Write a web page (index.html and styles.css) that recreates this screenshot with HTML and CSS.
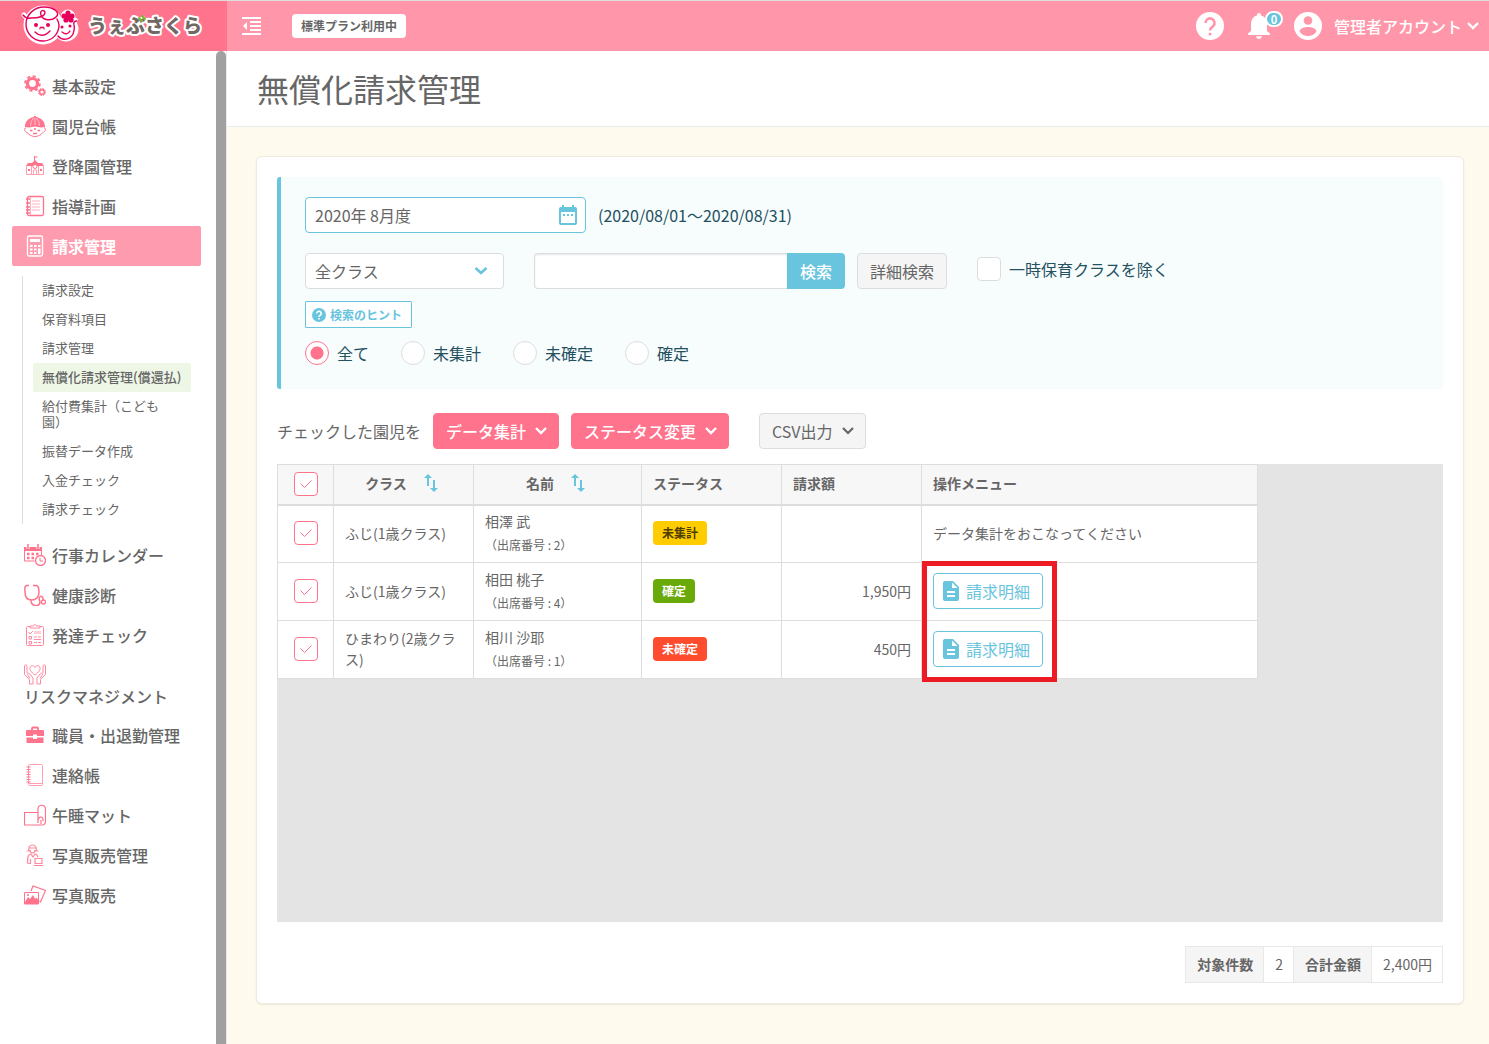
FILE: index.html
```html
<!DOCTYPE html>
<html lang="ja">
<head>
<meta charset="utf-8">
<meta name="viewport" content="width=device-width, initial-scale=1">
<title>無償化請求管理</title>
<link rel="stylesheet" href="styles.css">
</head>
<body>
<header class="topbar">
  <a class="brand" href="#" aria-label="うぇぶさくら">
    <svg class="brand-logo" width="190" height="46" viewBox="0 0 190 46">
      <g stroke="#fff" fill="#fff" stroke-linecap="round" stroke-linejoin="round">
        <path stroke-width="5" d="M3 12q5 6 13 4q16-1 22 1"/>
        <circle stroke-width="3" cx="22" cy="22" r="18"/>
        <circle stroke-width="3" cx="45" cy="26" r="11"/>
        <circle stroke-width="3" cx="47" cy="14" r="6"/>
        <path stroke-width="4" d="M55 17l-2 5"/>
      </g>
      <g fill="none" stroke="#e6005c" stroke-width="1.4" stroke-linecap="round">
        <path d="M2 12q3 4 8 3c7 0 13-1 14-5c0-4-6-3-4 2c2 6 11 6 15 2c5-4-2-10-12-10C13 4 5 12 5 21c0 10 8 17 17 17c9 0 16-7 16-16c0-2-1-4-2-6"/>
        <path d="M14 29q7 7 15-1"/>
        <path stroke-width="1.2" d="M19 26v-1q1-2 2 0M21 25q1-2 2 0v1"/>
        <path d="M37 33c4 5 12 4 15-2c1-3 2-6 1-9q-1-4 3-4M41 29q5 4 8-1"/>
      </g>
      <g fill="#e6005c">
        <circle cx="15" cy="22" r="2"/><circle cx="27" cy="22" r="2"/>
        <circle cx="41" cy="24" r="1.500"/><circle cx="49" cy="23" r="1.500"/>
        <circle cx="47" cy="10" r="2.600"/><circle cx="51" cy="13" r="2.600"/><circle cx="50" cy="17" r="2.600"/><circle cx="45" cy="17" r="2.600"/><circle cx="43" cy="13" r="2.600"/><circle cx="47" cy="14" r="3"/>
      </g>
      <text class="brand-text" x="67" y="30">うぇぶさくら</text>
      <path d="M118 15l3 3M121 13l3 3" stroke="#76b82a" stroke-width="2" stroke-linecap="round"/>
    </svg>
  </a>
  <button class="icon-button menu-toggle" type="button" aria-label="メニュー">
    <svg width="20" height="20" viewBox="0 0 20 20"><path d="M0 2h19M8 6h11M8 10h11M8 14h11M0 18h19" stroke="#fff" stroke-width="2"/><path d="M5 6v8l-4-4z" fill="#fff"/></svg>
  </button>
  <span class="plan">標準プラン利用中</span>
  <div class="account-area">
    <button class="icon-button" type="button" aria-label="ヘルプ">
      <svg width="28" height="28" viewBox="0 0 28 28"><circle cx="14" cy="14" r="14" fill="#fff"/><path d="M9.500 11a4.500 4.500 0 1 1 7.700 3.100C15.500 15.700 14 16.300 14 18.600" fill="none" stroke="#ff96a9" stroke-width="2.600"/><path d="M12.700 20.800h2.600v2.600h-2.600z" fill="#ff96a9"/></svg>
    </button>
    <button class="icon-button bell" type="button" aria-label="お知らせ">
      <svg width="22" height="28" viewBox="0 0 22 28"><path d="M11 27a2.700 2.700 0 0 0 2.700-2.700H8.300A2.700 2.700 0 0 0 11 27zM19 19v-7c0-4.300-2.200-7.600-6-8.500V3a2 2 0 0 0-4 0v.5C5.200 4.400 3 7.700 3 12v7l-3 2.600V23h22v-1.400z" fill="#fff"/></svg>
      <span class="bell-count">0</span>
    </button>
    <button class="account" type="button">
      <svg width="28" height="28" viewBox="0 0 28 28"><circle cx="14" cy="14" r="14" fill="#fff"/><circle cx="14" cy="8.500" r="4.300" fill="#ff96a9"/><path d="M5.500 19.500C6 16 11 15 14 15s8 1 8.500 4.500C20.500 22.500 17.500 24 14 24s-6.500-1.500-8.500-4.500z" fill="#ff96a9"/></svg>
      <span>管理者アカウント</span>
      <svg class="account-arrow" width="14" height="14" viewBox="0 0 14 14"><path d="M2 4l5 5 5-5" fill="none" stroke="#fff" stroke-width="2.400"/></svg>
    </button>
  </div>
</header>

<div class="layout">
  <aside class="sidebar">
    <nav class="nav">
      <a class="nav-item" href="#"><svg viewBox="0 0 22 22"><circle cx="8.500" cy="8.500" r="5" fill="none" stroke="#ff738c" stroke-width="3.200"/><circle cx="8.500" cy="8.500" r="7.300" fill="none" stroke="#ff738c" stroke-width="2" stroke-dasharray="3 2.730"/><circle cx="18" cy="17" r="2.400" fill="none" stroke="#ff738c" stroke-width="1.600"/><circle cx="18" cy="17" r="3.600" fill="none" stroke="#ff738c" stroke-width="1" stroke-dasharray="1.500 1.330"/></svg><span>基本設定</span></a>
      <a class="nav-item" href="#"><svg viewBox="0 0 22 22"><path d="M2 13c-2.500 0-2 3 .5 4C5 20 8 21.500 11 21.500s6-1.500 8.500-4.500c2.500-1 3-4 .5-4" fill="#fff" stroke="#ff738c"/><path d="M1 12C1 6 5 3 9.500 2L11 .5 12.500 2C17 3 21 6 21 12l-4 .5-6-1-6 1z" fill="#ff738c"/><path d="M6.500 11q0-5 3-8M15.500 11q0-5-3-8M11 3v7" stroke="#ffc4cf" fill="none"/><path d="M6 15.500h2.500M13.500 15.500H16M9 18.500h4M10 14h2" stroke="#ff738c" stroke-width="1.500"/></svg><span>園児台帳</span></a>
      <a class="nav-item" href="#"><svg viewBox="0 0 22 22"><path d="M2 11l2-3h4l3-3 3 3h4l2 3z" fill="#ff738c"/><path d="M10.500 1v5M10.500 2h3" stroke="#ff738c"/><path d="M2.500 11v8.500h17V11M7.500 11v8M14.500 11v8M9.500 19v-4h3v4" fill="none" stroke="#ff9fb0"/><circle cx="11" cy="11.500" r="2" fill="#fff" stroke="#ff738c"/><path d="M4 14h2v2H4zM16 14h2v2h-2z" fill="#ff738c"/></svg><span>登降園管理</span></a>
      <a class="nav-item" href="#"><svg viewBox="0 0 22 22"><rect x="3.500" y="1.500" width="16" height="19" rx="1.500" fill="none" stroke="#ff738c" stroke-width="1.300"/><path d="M6.500 2v18M8 6h8M8 9h8M8 12h8M8 15h8" stroke="#ffb3c0"/><path d="M2 4h4M2 8h4M2 12h4M2 15h4M2 18h4" stroke="#ff738c" stroke-width="1.300"/></svg><span>指導計画</span></a>
      <a class="nav-item nav-item-current" href="#"><svg viewBox="0 0 22 22"><rect x="3.500" y="1" width="15" height="20" rx="1.500" fill="none" stroke="#fff" stroke-width="1.300"/><path d="M6 4h10v3H6z" fill="#fff"/><path d="M6 11h2.500M10 11h2.500M14 11h2.500M6 14.500h2.500M10 14.500h2.500M6 18h2.500M10 18h2.500" stroke="#fff" stroke-width="2"/><path d="M14 13.500h2.500V19H14z" fill="#fff"/></svg><span>請求管理</span></a>
      <div class="subnav">
        <a href="#">請求設定</a>
        <a href="#">保育料項目</a>
        <a href="#">請求管理</a>
        <a class="subnav-current" href="#">無償化請求管理(償還払)</a>
        <a href="#">給付費集計（こども園）</a>
        <a href="#">振替データ作成</a>
        <a href="#">入金チェック</a>
        <a href="#">請求チェック</a>
      </div>
      <a class="nav-item" href="#"><svg viewBox="0 0 22 22"><path d="M.5 6v11h10M17.500 6v5" fill="none" stroke="#ff738c"/><path d="M0 3h18v4H0z" fill="#ff738c"/><path d="M4 0v5M14 0v5" stroke="#fff" stroke-width="3"/><path d="M4 0v5M14 0v5" stroke="#ff738c" stroke-width="1.500"/><path d="M3 10h2.500M7.500 10H10M12 10h2.500M3 14h2.500M7.500 14H10" stroke="#ff738c" stroke-width="2.400"/><circle cx="16.500" cy="16.500" r="5" fill="#fff" stroke="#ff738c" stroke-width="1.300"/><path d="M16 13.500V17h3" fill="none" stroke="#ff738c"/></svg><span>行事カレンダー</span></a>
      <a class="nav-item" href="#"><svg viewBox="0 0 22 22"><path d="M5 1.500H2.500C0 2 1 6 1 8c0 5 2 8 6.500 8S15 13 15 8c0-2 0-6-2.500-6.500H9M7 16c0 7 8 7 9 2.500 0-2-1.500-3-.5-5 1.500-2.500 4-1 3.500 3" fill="none" stroke="#ff738c" stroke-width="1.500"/><circle cx="19.500" cy="18" r="2" fill="#fff" stroke="#ff738c" stroke-width="1.300"/></svg><span>健康診断</span></a>
      <a class="nav-item" href="#"><svg viewBox="0 0 22 22"><rect x="2.500" y="2.500" width="17" height="19" rx="1" fill="none" stroke="#ff8a9f"/><path d="M6 4V2h3q2-3 4 0h3v2z" fill="#fff" stroke="#ff8a9f"/><path d="M10 7h7v3h-7z" fill="#ffd0d8"/><path d="M4.500 8l1.500 2 3-3M5 12.500h2.500V15H5zM5 17.500h2.500V20H5zM10 13h3M14 13h3M10 15.500h7M10 18.500h3M14 18.500h3" fill="none" stroke="#ff8a9f"/></svg><span>発達チェック</span></a>
      <a class="nav-item" href="#"><svg viewBox="0 0 22 22"><path d="M11 12C7 9 5.500 7 6 4.500c1-2.500 4-2.500 5 0 1-2.500 4-2.500 5 0 .5 2.500-1 4.500-5 7.500zM.5 3v8.500l5 5V21H9v-6L5.500 10.500c-1-1-2.500 0-2 1l2.500 4M3 10V3C3 1.500.5 1.500.5 3M21.500 3v8.500l-5 5V21H13v-6l3.500-4.500c1-1 2.500 0 2 1l-2.500 4M19 10V3c0-1.500 2.500-1.500 2.500 0" fill="none" stroke="#ff8a9f"/></svg><span>リスクマネジメント</span></a>
      <a class="nav-item" href="#"><svg viewBox="0 0 22 22"><path d="M8 6V4.500q0-1 1-1h4q1 0 1 1V6" fill="none" stroke="#ff738c" stroke-width="1.800"/><path d="M3 6h16q1 0 1 1v5h-7v-1.500H9V12H2V7q0-1 1-1zM2.500 13.500H9V15h4v-1.500h6.500V19h-17z" fill="#ff738c"/></svg><span>職員・出退勤管理</span></a>
      <a class="nav-item" href="#"><svg viewBox="0 0 22 22"><rect x="4.500" y=".5" width="14" height="21" rx="1" fill="none" stroke="#ff9fb0"/><path d="M4 19.500h14" stroke="#ff9fb0"/><path d="M2.500 3h4M2.500 5.500h4M2.500 8h4M2.500 10.500h4M2.500 13h4M2.500 15.500h4M2.500 18h4" stroke="#ff738c"/></svg><span>連絡帳</span></a>
      <a class="nav-item" href="#"><svg viewBox="0 0 22 22"><path d="M14 8.500H.5v12.500H18c2 0 3.500-1.500 3.500-4V5c0-5-7.500-5-7.500 0v14M14 16c1-4 5-4 5 0v1M17 20v-4" fill="none" stroke="#ff738c" stroke-width="1.200"/></svg><span>午睡マット</span></a>
      <a class="nav-item" href="#"><svg viewBox="0 0 22 22"><path d="M5 7C4 3 6 1 8.500 1S13 3 12 7M2.500 7H6M11 7h3.500M5 4h7M6 6c0 4 5 4 5 0M3.500 19c0-6 .5-9 3.500-9l2 3 2-3q2 0 3 3M3.500 19.500H7M6.500 19v-4M11 14.500h7v5h-7zM9.500 21.500H19" fill="none" stroke="#ff8a9f" stroke-width="1.200"/></svg><span>写真販売管理</span></a>
      <a class="nav-item" href="#"><svg viewBox="0 0 22 22"><path d="M7 7l2-5 12.500 4.500-5 11.500-1-1" fill="none" stroke="#ff738c" stroke-width="1.200"/><path d="M.5 8.500h14V20H.5z" fill="#fff" stroke="#ff738c"/><path d="M1 18l3-5 2 2 3-4 2 4 1.500-1.500L15 17v3H1z" fill="#ff738c"/><circle cx="4" cy="11" r="1" fill="#ff738c"/></svg><span>写真販売</span></a>
    </nav>
    <div class="scroll-thumb"></div>
  </aside>

  <main class="main">
    <div class="page-head"><h1>無償化請求管理</h1></div>
    <section class="card">
      <form class="filter">
        <div class="row">
          <div class="month">
            <input id="month" type="text" value="2020年 8月度" aria-label="対象月">
            <svg class="month-icon" width="20" height="20" viewBox="0 0 20 20"><path d="M4 0h2v2h8V0h2v2h1q2 0 2 2v14q0 2-2 2H3q-2 0-2-2V4q0-2 2-2h1zM3 7v11h14V7zM5 9h2v2H5zM9 9h2v2H9zM13 9h2v2h-2z" fill="#69c4de" fill-rule="evenodd"/></svg>
          </div>
          <label class="range" for="month">(2020/08/01～2020/08/31)</label>
        </div>
        <div class="row search-row">
          <select class="class-select" aria-label="クラス"><option>全クラス</option></select>
          <div class="search">
            <input type="text" aria-label="検索語">
            <button type="button">検索</button>
          </div>
          <button class="button-plain detail" type="button">詳細検索</button>
          <label class="choice exclude"><input class="tick" type="checkbox">一時保育クラスを除く</label>
        </div>
        <button class="hint" type="button"><svg width="14" height="14" viewBox="0 0 14 14"><circle cx="7" cy="7" r="7" fill="#69c4de"/><path d="M4.800 5.500a2.200 2.200 0 1 1 3.500 1.800C7.400 7.900 7 8.100 7 9.100" fill="none" stroke="#fff" stroke-width="1.600"/><path d="M6.200 10h1.600v1.600H6.200z" fill="#fff"/></svg><span>検索のヒント</span></button>
        <div class="radios">
          <label class="choice"><input class="radio" type="radio" name="state" checked>全て</label>
          <label class="choice"><input class="radio" type="radio" name="state">未集計</label>
          <label class="choice"><input class="radio" type="radio" name="state">未確定</label>
          <label class="choice"><input class="radio" type="radio" name="state">確定</label>
        </div>
      </form>

      <div class="toolbar">
        <span>チェックした園児を</span>
        <button class="button-pink" type="button">データ集計<svg width="14" height="14" viewBox="0 0 14 14"><path d="M2 4l5 5 5-5" fill="none" stroke="#fff" stroke-width="2.400"/></svg></button>
        <button class="button-pink" type="button">ステータス変更<svg width="14" height="14" viewBox="0 0 14 14"><path d="M2 4l5 5 5-5" fill="none" stroke="#fff" stroke-width="2.400"/></svg></button>
        <button class="button-plain csv" type="button">CSV出力<svg width="14" height="14" viewBox="0 0 14 14"><path d="M2 4l5 5 5-5" fill="none" stroke="#666" stroke-width="2.200"/></svg></button>
      </div>

      <div class="grid-pane">
        <table class="grid">
          <colgroup><col class="col-check"><col class="col-class"><col class="col-name"><col class="col-status"><col class="col-amount"><col class="col-menu"></colgroup>
          <thead>
            <tr>
              <th class="center"><input class="tick" type="checkbox" checked aria-label="全て選択"></th>
              <th><span class="sortable">クラス<svg width="14" height="18" viewBox="0 0 14 18"><path d="M4 0l4 4H5v8H3V4H0zM10 18l-4-4h3V6h2v8h3z" fill="#69c4de"/></svg></span></th>
              <th><span class="sortable">名前<svg width="14" height="18" viewBox="0 0 14 18"><path d="M4 0l4 4H5v8H3V4H0zM10 18l-4-4h3V6h2v8h3z" fill="#69c4de"/></svg></span></th>
              <th>ステータス</th>
              <th>請求額</th>
              <th>操作メニュー</th>
            </tr>
          </thead>
          <tbody>
            <tr>
              <td class="center"><input class="tick" type="checkbox" checked aria-label="相澤 武"></td>
              <td>ふじ(1歳クラス)</td>
              <td>相澤 武<small>（出席番号 : 2）</small></td>
              <td><span class="status status-open">未集計</span></td>
              <td class="amount"></td>
              <td>データ集計をおこなってください</td>
            </tr>
            <tr>
              <td class="center"><input class="tick" type="checkbox" checked aria-label="相田 桃子"></td>
              <td>ふじ(1歳クラス)</td>
              <td>相田 桃子<small>（出席番号 : 4）</small></td>
              <td><span class="status status-fixed">確定</span></td>
              <td class="amount">1,950円</td>
              <td><button class="statement" type="button"><svg width="16" height="20" viewBox="0 0 16 20"><path d="M2 0h8l6 6v12q0 2-2 2H2q-2 0-2-2V2q0-2 2-2zM9 1.500V7h5.500zM4 10v2h8v-2zM4 14v2h8v-2z" fill="#69c4de" fill-rule="evenodd"/></svg>請求明細</button></td>
            </tr>
            <tr>
              <td class="center"><input class="tick" type="checkbox" checked aria-label="相川 沙耶"></td>
              <td>ひまわり(2歳クラス)</td>
              <td>相川 沙耶<small>（出席番号 : 1）</small></td>
              <td><span class="status status-pending">未確定</span></td>
              <td class="amount">450円</td>
              <td><button class="statement" type="button"><svg width="16" height="20" viewBox="0 0 16 20"><path d="M2 0h8l6 6v12q0 2-2 2H2q-2 0-2-2V2q0-2 2-2zM9 1.500V7h5.500zM4 10v2h8v-2zM4 14v2h8v-2z" fill="#69c4de" fill-rule="evenodd"/></svg>請求明細</button></td>
            </tr>
          </tbody>
        </table>
        <div class="highlight-frame"></div>
      </div>

      <table class="summary">
        <tr><th scope="row">対象件数</th><td>2</td><th scope="row">合計金額</th><td>2,400円</td></tr>
      </table>
    </section>
  </main>
</div>
</body>
</html>
```
FILE: styles.css
```css
* {
  box-sizing: border-box;
}

body {
  display: flex;
  flex-direction: column;
  min-height: 100vh;
  margin: 0;
  background: #fffaee;
  color: #666;
  font-family: "Noto Sans CJK JP", sans-serif;
  font-size: 16px;
  line-height: 24px;
}

a {
  color: inherit;
  text-decoration: none;
}

button,
input,
select {
  margin: 0;
  font: inherit;
  color: inherit;
}

button {
  cursor: pointer;
}

svg {
  display: block;
  flex: none;
}

/* Top bar */
.topbar {
  display: flex;
  align-items: center;
  height: 51px;
  border-top: 1px solid #ddd;
  background: #ff96a9;
  color: #fff;
}

.brand {
  display: flex;
  align-items: center;
  align-self: stretch;
  width: 227px;
  padding-left: 21px;
  background: #ff738c;
}

.brand-text {
  font-size: 19px;
  font-weight: 900;
  fill: #716864;
  stroke: #fff;
  stroke-width: 4px;
  stroke-linejoin: round;
  paint-order: stroke;
}

.icon-button {
  padding: 0;
  border: 0;
  background: none;
}

.menu-toggle {
  margin-left: 15px;
}

.plan {
  margin-left: 30px;
  padding: 0 9px;
  border-radius: 4px;
  background: #fff;
  color: #666;
  font-size: 12px;
  font-weight: 700;
}

.account-area {
  display: flex;
  align-items: center;
  gap: 24px;
  margin-left: auto;
  padding-right: 9px;
}

.bell {
  position: relative;
}

.bell-count {
  position: absolute;
  top: -1px;
  left: 17px;
  width: 18px;
  height: 16px;
  border: 2px solid #fff;
  border-radius: 8px;
  background: #69c4de;
  color: #fff;
  font-size: 11px;
  font-weight: 700;
  line-height: 12px;
}

.account {
  display: flex;
  align-items: center;
  gap: 12px;
  padding: 0;
  border: 0;
  background: none;
  color: #fff;
  font-weight: 500;
}

.account-arrow {
  margin-left: -8px;
}

/* Layout */
.layout {
  display: flex;
  flex: 1;
}

.sidebar {
  display: flex;
  flex: none;
  width: 227px;
  border-right: 1px solid #e8e8ee;
  background: #fff;
}

.nav {
  flex: 1;
  padding: 15px 15px 16px 12px;
}

.scroll-thumb {
  width: 10px;
  border-radius: 5px 5px 0 0;
  background: #a0a0a0;
}

.nav-item {
  display: flex;
  flex-wrap: wrap;
  align-content: center;
  align-items: center;
  column-gap: 6px;
  min-height: 40px;
  padding: 8px 12px;
  border-radius: 2px;
  font-weight: 500;
  line-height: 22px;
}

.nav-item svg {
  width: 22px;
  height: 22px;
}

.nav-item-current {
  background: #ff9bae;
  color: #fff;
  font-weight: 700;
}

.subnav {
  margin: 10px 10px 11px;
  padding-left: 10px;
  border-left: 1px solid #ddd;
  font-size: 13px;
  line-height: 16px;
  text-spacing-trim: space-all;
}

.subnav a {
  display: block;
  padding: 6px 9px 7px;
}

.subnav .subnav-current {
  border-radius: 2px;
  background: #eef6e6;
  font-weight: 500;
}

.main {
  flex: 1;
  min-width: 0;
}

.page-head {
  padding: 13px 30px 14px;
  border-bottom: 1px solid #e8eaec;
  background: #fff;
}

.page-head h1 {
  margin: 0;
  font-size: 32px;
  font-weight: 400;
  line-height: 48px;
}

.card {
  margin: 29px 25px 40px 29px;
  padding: 20px;
  border: 1px solid #f0ebe0;
  border-radius: 6px;
  background: #fff;
  box-shadow: 0 1px 2px rgba(0, 0, 0, 0.08);
}

/* Filter */
.filter {
  padding: 20px 24px 24px;
  border-left: 4px solid #69c4de;
  border-radius: 3px;
  background: #f7fdfd;
  color: #24505f;
}

.row {
  display: flex;
  align-items: center;
}

.month {
  position: relative;
  width: 281px;
  color: #666;
}

.month input {
  display: block;
  width: 100%;
  height: 36px;
  padding: 0 36px 0 9px;
  border: 1px solid #69c4de;
  border-radius: 4px;
  background: #fff;
}

.month-icon {
  position: absolute;
  top: 8px;
  right: 8px;
}

.range {
  margin-left: 12px;
}

.search-row {
  margin: 20px 0 12px;
}

.class-select {
  width: 199px;
  height: 36px;
  padding: 0 36px 0 9px;
  border: 1px solid #ddd;
  border-radius: 4px;
  appearance: none;
  background: #fff url("data:image/svg+xml,%3Csvg xmlns='http://www.w3.org/2000/svg' width='14' height='14'%3E%3Cpath d='M1.500 4l5.500 5 5.500-5' fill='none' stroke='%2369c4de' stroke-width='2.600'/%3E%3C/svg%3E") no-repeat right 15px center;
  color: #666;
}

.search {
  display: flex;
  margin-left: 30px;
}

.search input {
  width: 253px;
  height: 36px;
  padding: 0 10px;
  border: 1px solid #ddd;
  border-right: 0;
  border-radius: 4px 0 0 4px;
  background: #fff;
  box-shadow: inset 0 1px 2px rgba(0, 0, 0, 0.1);
}

.search button {
  padding: 0 13px;
  border: 0;
  border-radius: 0 4px 4px 0;
  background: #69c4de;
  color: #fff;
  font-weight: 500;
}

.button-plain,
.button-pink {
  display: flex;
  align-items: center;
  gap: 8px;
  height: 36px;
  padding: 0 12px;
  border: 1px solid #ddd;
  border-radius: 4px;
  background: #f5f5f5;
  color: #666;
}

.button-pink {
  padding: 0 10px 0 12px;
  border-color: #ff738c;
  background: #ff738c;
  color: #fff;
  font-weight: 500;
}

.detail {
  margin-left: 12px;
}

.choice {
  display: flex;
  align-items: center;
  gap: 8px;
}

.exclude {
  align-self: flex-start;
  margin: 4px 0 0 30px;
}

.tick,
.radio {
  display: block;
  flex: none;
  width: 24px;
  height: 24px;
  border: 1px solid #ddd;
  border-radius: 4px;
  appearance: none;
  background: #fff;
}

.tick:checked {
  border-color: #ff738c;
  background: #fff url("data:image/svg+xml,%3Csvg xmlns='http://www.w3.org/2000/svg' width='12' height='10'%3E%3Cpath d='M.5 4.500l4 4 7-7' fill='none' stroke='%23ff738c'/%3E%3C/svg%3E") no-repeat center;
}

.radio {
  border-radius: 50%;
}

.radio:checked {
  border-color: #ff738c;
  background: radial-gradient(circle, #ff738c 6px, #fff 7px);
}

.hint {
  display: flex;
  align-items: center;
  gap: 4px;
  height: 27px;
  padding: 0 9px 0 6px;
  border: 1px solid #69c4de;
  border-radius: 1px;
  background: #fff;
  color: #69c4de;
  font-size: 12px;
  font-weight: 700;
}

.radios {
  display: flex;
  gap: 32px;
  margin-top: 13px;
}

/* Bulk actions */
.toolbar {
  display: flex;
  align-items: center;
  gap: 12px;
  margin: 24px 0 15px;
}

.csv {
  margin-left: 18px;
  padding-right: 10px;
}

/* Data grid */
.grid-pane {
  position: relative;
  min-height: 458px;
  overflow: auto;
  background: #e4e4e4;
}

.grid {
  width: 981px;
  border-collapse: collapse;
  table-layout: fixed;
  background: #fff;
  font-size: 14px;
  line-height: 21px;
}

.col-check {
  width: 56px;
}

.col-class,
.col-status,
.col-amount {
  width: 140px;
}

.col-name {
  width: 168px;
}

.grid th,
.grid td {
  height: 58px;
  padding: 0 11px 1px;
  border: 1px solid #ddd;
  text-align: left;
}

.grid th {
  height: 40px;
  padding-bottom: 2px;
  border-bottom-width: 2px;
  background: #f7f7f7;
}

.grid .center {
  padding-bottom: 1px;
}

.grid .tick {
  margin: 0 auto;
}

.grid small {
  display: block;
  margin-top: 2px;
  font-size: 12px;
}

.grid .amount {
  padding-right: 10px;
  text-align: right;
}

.sortable {
  display: flex;
  justify-content: center;
  align-items: center;
  gap: 17px;
  padding-right: 4px;
}

.status {
  display: inline-block;
  padding: 0 9px;
  border-radius: 4px;
  color: #fff;
  font-size: 12px;
  font-weight: 700;
  line-height: 24px;
  vertical-align: middle;
}

.status-open {
  background: #fc0;
  color: #4d3d00;
}

.status-fixed {
  background: #6aaa08;
}

.status-pending {
  background: #ff4b2e;
}

.statement {
  display: flex;
  align-items: center;
  gap: 7px;
  height: 36px;
  padding: 0 12px 0 9px;
  border: 1px solid #69c4de;
  border-radius: 4px;
  background: #fff;
  color: #69c4de;
  font-size: 16px;
}

.highlight-frame {
  position: absolute;
  top: 97px;
  left: 645px;
  width: 135px;
  height: 121px;
  border: 5px solid #ed1c24;
  pointer-events: none;
}

/* Totals */
.summary {
  margin: 24px 0 0 auto;
  border-collapse: collapse;
  font-size: 14px;
  line-height: 21px;
}

.summary th,
.summary td {
  height: 36px;
  padding: 0 10px 0 11px;
  border: 1px solid #e8e8e8;
}

.summary th {
  background: #f5f5f5;
}
```
